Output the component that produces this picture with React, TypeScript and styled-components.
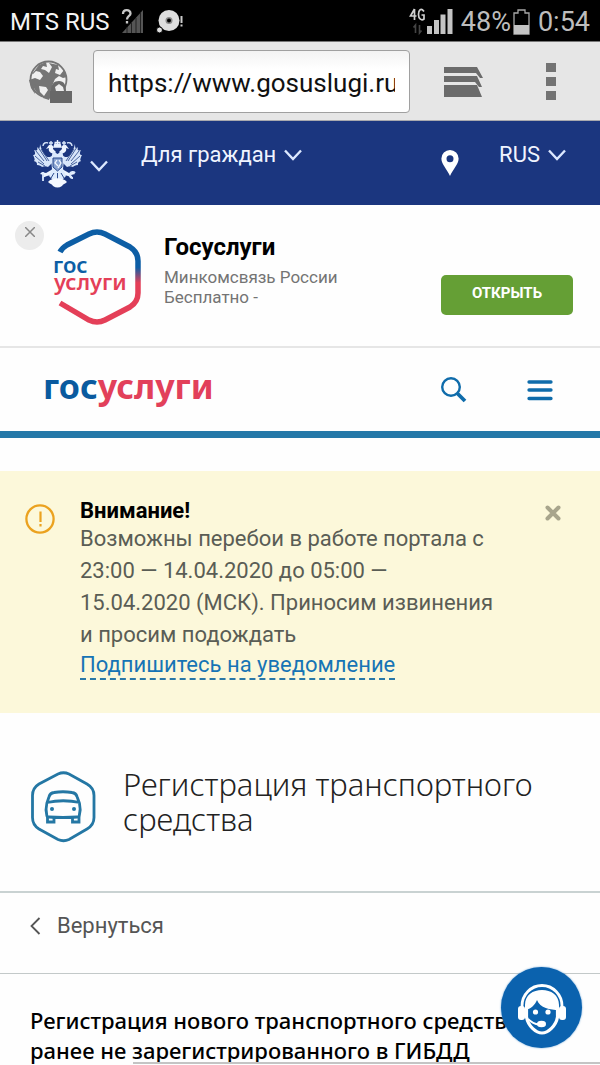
import React from "react";
import styled, { createGlobalStyle } from "styled-components";

const GlobalStyle = createGlobalStyle`
  * { box-sizing: border-box; }
  body {
    margin: 0;
    background: #fefefe;
    color: #000;
    font-family: Roboto, "Liberation Sans", sans-serif;
  }
  h1, h2, p { margin: 0; }
  button { border: 0; padding: 0; background: none; font: inherit; color: inherit; cursor: pointer; }
  svg { display: block; flex: none; }
`;

const brandFont = `"Noto Sans", "Open Sans", sans-serif`;

const Page = styled.div`
  display: flex;
  flex-direction: column;
`;

const StatusBar = styled.div`
  display: flex;
  align-items: center;
  justify-content: space-between;
  height: 42px;
  padding: 2px 10px 0;
  background: #000;
  color: #fff;
  border-bottom: 1px solid #777;
`;

const StatusGroup = styled.div<{ $muted?: boolean; $gap: number }>`
  display: flex;
  align-items: center;
  gap: ${(p) => p.$gap}px;
  color: ${(p) => (p.$muted ? "#bdbdbd" : "#f4f4f4")};
`;

const StatusText = styled.span<{ $size: number }>`
  font-size: ${(p) => p.$size}px;
  line-height: 32px;
  white-space: nowrap;
`;

const BrowserBar = styled.div`
  display: flex;
  align-items: center;
  height: 79px;
  padding: 1px 44px 0 29px;
  background: #e6e6e6;
  border-bottom: 1px solid #a9a9ae;
`;

const UrlInput = styled.input`
  flex: 1;
  min-width: 0;
  height: 63px;
  margin: 0 34px 0 21px;
  padding: 2px 14px 0;
  border: 1px solid #a0a0a0;
  border-radius: 4px;
  background: linear-gradient(#f3f3f3, #fff 30%);
  color: #111;
  font-family: inherit;
  font-size: 26px;
  outline: none;
`;

const IconButton = styled.button`
  display: flex;
  align-items: center;
  justify-content: center;
`;

const BrowserActions = styled.div`
  display: flex;
  align-items: center;
  gap: 62px;
`;

const TopNav = styled.nav`
  display: flex;
  align-items: flex-start;
  height: 84px;
  padding: 19px 34px 0 33px;
  background: #1b367f;
  color: #f0f4ff;
`;

const NavButton = styled.button`
  display: flex;
  align-items: center;
  gap: 8px;
  font-size: 22px;
  line-height: 30px;
  white-space: nowrap;
`;

const EmblemButton = styled(NavButton)`
  margin-right: 33px;
`;

const EmblemChevron = styled.span`
  padding-top: 4px;
`;

const PinButton = styled(IconButton)`
  margin: 10px 40px 0 auto;
`;

const AppBanner = styled.section`
  display: flex;
  align-items: flex-start;
  height: 143px;
  padding: 16px 27px 0 15px;
  border-bottom: 2px solid #e6e6e6;
`;

const BannerClose = styled(IconButton)`
  align-items: flex-start;
  width: 29px;
  height: 29px;
  padding-top: 6px;
  border-radius: 50%;
  background: #ececec;
`;

const BannerLogo = styled.div`
  margin: 8px 18px 0 6px;
`;

const BannerText = styled.div`
  flex: 1;
  padding-top: 10px;
  font-size: 17px;
  line-height: 20px;
  color: #747474;
`;

const BannerTitle = styled.h2`
  margin-bottom: 4px;
  font-size: 24px;
  line-height: 32px;
  font-weight: 700;
  color: #000;
`;

const OpenButton = styled.button`
  width: 132px;
  height: 40px;
  margin-top: 54px;
  padding-bottom: 4px;
  border-radius: 5px;
  background: #659f35;
  color: #fff;
  font-size: 15px;
  font-weight: 700;
`;

const SiteHeader = styled.header`
  display: flex;
  align-items: center;
  height: 90px;
  padding: 0 47px 0 43px;
  border-bottom: 7px solid #2478a8;
`;

const Brand = styled.a`
  margin-right: auto;
  padding-bottom: 8px;
  font-family: ${brandFont};
  font-size: 34px;
  line-height: 40px;
  font-weight: 700;
  color: #0a5a9f;
  text-decoration: none;
`;

const BrandAccent = styled.span`
  color: #e2405a;
`;

const HeaderActions = styled.div`
  display: flex;
  align-items: center;
  gap: 60px;
`;

const Notice = styled.section`
  display: flex;
  align-items: flex-start;
  margin-top: 33px;
  padding: 24px 39px 33px 25px;
  background: #fcf8da;
`;

const NoticeIcon = styled.div`
  margin: 9px 25px 0 0;
`;

const NoticeBody = styled.div`
  flex: 1;
  padding-right: 50px;
  font-size: 22px;
  line-height: 32px;
  color: #5a5d55;
`;

const NoticeTitle = styled.h2`
  font-size: 22px;
  line-height: 32px;
  font-weight: 700;
  color: #000;
`;

const NoticeText = styled.p`
  margin-top: -4px;
`;

const NoticeLink = styled.a`
  display: block;
  width: fit-content;
  line-height: 27px;
  color: #1674b5;
  text-decoration: none;
  border-bottom: 2px dashed #2a78a8;
`;

const NoticeClose = styled(IconButton)`
  margin-top: 10px;
`;

const ServiceHead = styled.section`
  display: flex;
  align-items: flex-start;
  min-height: 180px;
  padding: 54px 30px 0;
  border-bottom: 2px solid #c9d2d2;
`;

const ServiceIcon = styled.div`
  padding: 4px 27px 0 0;
`;

const ServiceTitle = styled.h1`
  font-family: ${brandFont};
  font-size: 31px;
  line-height: 35px;
  font-weight: 300;
  color: #222;
`;

const BackRow = styled.div`
  height: 81px;
  padding: 17px 30px;
  border-bottom: 1px solid #c3c9c9;
`;

const BackLink = styled.a`
  display: inline-flex;
  align-items: center;
  gap: 16px;
  font-size: 22px;
  line-height: 32px;
  color: #555;
  text-decoration: none;
`;

const Description = styled.p`
  padding: 31px 30px 0;
  font-family: ${brandFont};
  font-size: 22px;
  line-height: 30px;
  font-weight: 500;
  color: #000;
  overflow: hidden;
`;

const TextLine = styled.span`
  display: block;
  white-space: nowrap;
`;

const ScrollTrack = styled.div`
  position: fixed;
  left: 133px;
  right: 0;
  bottom: 1px;
  height: 2px;
  background: #c4c4c4;
`;

const ChatButton = styled.button`
  position: fixed;
  right: 18px;
  bottom: 17px;
  display: flex;
  width: 81px;
  height: 81px;
  border-radius: 50%;
  background: #0b62ae;
  box-shadow: 0 0 2px #5f9bd0;
`;

const Chevron = () => (
  <svg width="18" height="12" viewBox="0 0 18 12" fill="none" stroke="#dce8ff" strokeWidth="2.4">
    <path d="M1 1.5 9 10l8-8.500" />
  </svg>
);

const NoSignal = () => (
  <svg width="24" height="28" viewBox="0 0 24 28">
    <path d="M1 25 22 2v23z" fill="#555" />
    <path d="M6 19v6M10.500 15v10M15 10v15M19.500 5v20" stroke="#222" strokeWidth="1" />
    <path d="M2 6c0-5 7.500-5 7.500-.5C9.500 8 6 8 6 11.500M6 13v2.500" fill="none" stroke="#c8c8c8" strokeWidth="2.300" />
  </svg>
);

const Disc = () => (
  <svg width="28" height="26" viewBox="0 0 28 26">
    <circle cx="13" cy="11.500" r="10.500" fill="#dedede" />
    <circle cx="13" cy="11.500" r="3.500" fill="#8a8a8a" />
    <circle cx="13" cy="11.500" r="2" fill="#000" />
    <circle cx="3.500" cy="21" r="3" fill="#ddd" stroke="#000" />
    <path d="M25.500 7v7M25.500 15.500v2" stroke="#ccc" strokeWidth="2" />
  </svg>
);

const Signal = () => (
  <svg width="44" height="28" viewBox="0 0 44 28">
    <path d="M5.500 1 1.500 8h6M5.500 1v11" fill="none" stroke="#d0d0d0" strokeWidth="1.700" />
    <path d="M15 3.500C12-.5 9.500 2 9.500 6.500s3 6.500 5.500 4.500V7h-2.500" fill="none" stroke="#d0d0d0" strokeWidth="1.700" />
    <path d="M6.500 25v-8l-2 2.500M10.500 17v8l2-2.500" fill="none" stroke="#444" strokeWidth="1.600" />
    <path d="M18 18h5v8h-5zM25 12h5v14h-5zM31.500 6.500h5V26h-5zM38.500 1h5v25h-5z" fill="#c4c4c4" />
  </svg>
);

const Battery = () => (
  <svg width="17" height="26" viewBox="0 0 17 26">
    <path d="M1 4h4V1h7v3h4v21H1z" fill="#000" stroke="#a8a8a8" strokeWidth="1.300" />
    <path d="M1 16h15v9H1z" fill="#c4c4c4" />
  </svg>
);

const Globe = () => (
  <svg width="43" height="43" viewBox="0 0 43 43">
    <circle cx="19.500" cy="19.500" r="18" fill="#f0f0f0" stroke="#757575" strokeWidth="1.800" />
    <path
      d="M3 14 10 5l7-3 1 5-4-1-2 3 4 1 4 3 3-6-3-4 9 2 1 5-3-1-1 4 5 2 4-5 3 7-4 1-4-2-4 3-3 7 4 6-5 3-2 5-6-2 1-6-4-4-6-1 1 7-4-6-2-8 6-2 5 2 3-4-3-4-4-1-3 3z"
      fill="#757575"
    />
    <path d="M3 24c3 7 6 11 13 13l-1-8-5-3z" fill="#757575" />
    <path d="M10 26l7 1 2 3-4 6-4-4z" fill="#f0f0f0" />
    <path d="M22 31c0-7 3-10 8-10s7 4 7 10z" fill="#6b6b6b" />
    <path d="M27 31l-1-4 4-3 4 3 1 4z" fill="#ececec" />
    <path d="M21 31h22v12H21z" fill="#686868" />
  </svg>
);

const TabsIcon = () => (
  <svg width="40" height="32" viewBox="0 0 40 32" fill="#6b6b6b">
    <path d="M0 1h33l6 11h-3l-4-5H0z" />
    <path d="M0 10h33l5 11h-3l-4-5H0z" />
    <path d="M0 19h33l5 12H0z" />
  </svg>
);

const MenuDots = () => (
  <svg width="10" height="38" viewBox="0 0 10 38" fill="#737373">
    <path d="M0 0h10v9H0zM0 14h10v9H0zM0 28h10v9H0z" />
  </svg>
);

const EagleWing = () => (
  <g>
    <path d="M20 15C15 20 10 16 7 4c0 5-1 5-3 3 1 4 0 4-3 3 2 4 1 5-1 5 2 4 2 5 1 6 3 1 3 2 3 4 3 0 4 1 5 2 2-1 4-1 6 0l5-5z" fill="#d8e6fa" />
    <path d="m3 11 8 10M2 16l9 8M5 7l9 14M5 22l7 4M8 9l8 12" fill="none" stroke="#375392" strokeWidth=".9" />
    <path d="M21 14c-4-1-6-3-5-6l-3 1 3-4c3-1 5 1 4 4l3 3" fill="#eef5ff" />
    <path d="M10 6c0-3 3-4 5-3M18 1v5M16 3h4" stroke="#d8e6fa" fill="none" strokeWidth="1.400" />
    <path d="m20 29-7 4-4-1-2 2 4 1-2 3 5-2 8-2" fill="#eef5ff" />
  </g>
);

const Eagle = () => (
  <svg width="49" height="48" viewBox="0 0 49 48">
    <EagleWing />
    <g transform="translate(49 0) scale(-1 1)">
      <EagleWing />
    </g>
    <path d="M24.500 0v7M21.500 2.500h6M21 7h7l-1-3-2.500 1L22 4z" stroke="#e8f1ff" strokeWidth="1.400" fill="#e8f1ff" />
    <path d="M20 11l4.500 3 4.500-3 2 8-1 10 3 7-5 5h-7l-5-5 3-7-1-10z" fill="#dceafd" />
    <path d="M20 18h9v9l-4.500 4-4.500-4z" fill="#8ba5d2" stroke="#29488c" />
    <path d="m24 20-2 3 3 3m1-6 2 3-3 5" stroke="#f4f8ff" fill="none" strokeWidth="1.300" />
    <path d="m21 33-3 5m10-5 3 5m-6.500-5v7" stroke="#29488c" strokeWidth="1" />
    <path d="M15 42c4-5 15-5 19 0-2 2-4 2-5 4-3 2-6 2-9 0-1-2-3-2-5-4z" fill="#f4f8ff" />
    <path d="M10 32v9" stroke="#dceafd" strokeWidth="1.800" />
    <path d="M42 33a3 3 0 1 0-2 5" stroke="#dceafd" strokeWidth="2" fill="none" />
  </svg>
);

const Pin = () => (
  <svg width="18" height="26" viewBox="0 0 18 26">
    <path fillRule="evenodd" d="M9 0a8.600 8.600 0 0 1 8.600 8.700C17.600 14 12 19 9 26 6 19 .4 14 .4 8.700A8.600 8.600 0 0 1 9 0zm0 5.200a3.500 3.500 0 1 0 0 7 3.500 3.500 0 0 0 0-7z" fill="#fff" />
  </svg>
);

const AppLogo = () => (
  <svg width="96" height="98" viewBox="0 0 96 98" fontFamily='"Noto Sans", sans-serif' fontWeight="600">
    <defs>
      <linearGradient id="logoStroke" x1="0" y1="0" x2="0" y2="96" gradientUnits="userSpaceOnUse">
        <stop offset=".4" stopColor="#0d5ea5" />
        <stop offset=".56" stopColor="#e43f58" />
      </linearGradient>
    </defs>
    <path
      d="M10 23Q12 19 17 16L39 5Q47 1 55 5L80 18Q88 23 88 32V64Q88 73 80 78L55 91Q47 95 39 91L10 74"
      fill="none"
      stroke="url(#logoStroke)"
      strokeWidth="5.500"
    />
    <text x="3" y="44" fontSize="22" fill="#0d5ea5">гос</text>
    <text x="4" y="61" fontSize="22" fill="#e43f58">услуги</text>
  </svg>
);

const SearchIcon = () => (
  <svg width="26" height="26" viewBox="0 0 26 26" fill="none" stroke="#0f6cab">
    <circle cx="10" cy="10" r="8.800" strokeWidth="2.400" />
    <path d="m16.500 16.500 7.500 7.500" strokeWidth="3.800" />
  </svg>
);

const MenuIcon = () => (
  <svg width="26" height="22" viewBox="0 0 26 22" stroke="#0f6cab" strokeWidth="3.300" strokeLinecap="round">
    <path d="M2 3h22M2 11h22M2 19.500h22" />
  </svg>
);

const WarningIcon = () => (
  <svg width="30" height="30" viewBox="0 0 30 30" fill="none" stroke="#eba21f" strokeWidth="2.300">
    <circle cx="15" cy="15" r="13.600" />
    <path d="M15.500 7.500v10.500M15.500 20v2.500" strokeWidth="2.200" />
  </svg>
);

const CarIcon = () => (
  <svg width="66" height="72" viewBox="0 0 66 72" fill="none" stroke="#2477a4" strokeWidth="2.800">
    <path d="M28 3Q33.500 .5 39 3L57 13Q64 17 64 24.500V46.500Q64 54 57 58L39 68.500Q33.500 71 28 68.500L9 58Q2.500 54 2.500 46.500V24.500Q2.500 17 9 13Z" />
    <path d="M24 21.500q9-1.500 18 0 4 .5 5 4l2.500 7q1.500 6-.2 12-.3 1.500-2 1.500-14 1-28.500 0-1.700 0-2-1.500-1.500-6 0-12l2.300-7q1-3.500 4.900-4zM17 31.500q16-3.500 33 0" />
    <path d="M17.500 45.500V51H24v-5M42.500 46v5H49v-5.500" />
    <circle cx="22" cy="38" r="2" fill="#2477a4" stroke="none" />
    <circle cx="44" cy="38" r="2" fill="#2477a4" stroke="none" />
  </svg>
);

const OperatorIcon = () => (
  <svg width="81" height="81" viewBox="0 0 81 81">
    <path d="M21 41v-2a20 20.500 0 0 1 40 0v2" fill="none" stroke="#fff" strokeWidth="2.800" />
    <rect x="17" y="39" width="7" height="14" rx="3" fill="#fff" />
    <rect x="58" y="39" width="7" height="14" rx="3" fill="#fff" />
    <path d="M25.500 42v8C27 59 35 66 41 66s14-7 15.500-16v-8" fill="none" stroke="#fff" strokeWidth="3.200" />
    <path d="M24 43v-5c0-10 8-15 17-15s17 5 17 15v5c-9 0-19-2-22-10-2 5-6 9-12 10z" fill="#fff" />
    <circle cx="34.500" cy="45" r="2.600" fill="#fff" />
    <circle cx="47" cy="45" r="2.600" fill="#fff" />
    <path d="M27 52c3 3 6 5 11 5.500" fill="none" stroke="#fff" strokeWidth="1.800" />
    <ellipse cx="40.500" cy="57" rx="4.500" ry="3.200" fill="#fff" />
  </svg>
);

export default function App() {
  return (
    <Page>
      <GlobalStyle />
      <StatusBar>
        <StatusGroup $gap={11}>
          <StatusText $size={24}>MTS RUS</StatusText>
          <NoSignal />
          <Disc />
        </StatusGroup>
        <StatusGroup $muted $gap={8}>
          <Signal />
          <StatusGroup $muted $gap={2}>
            <StatusText $size={27}>48%</StatusText>
            <Battery />
          </StatusGroup>
          <StatusText $size={27}>0:54</StatusText>
        </StatusGroup>
      </StatusBar>

      <BrowserBar>
        <Globe />
        <UrlInput type="text" aria-label="Адрес" defaultValue="https://www.gosuslugi.ru" />
        <BrowserActions>
          <IconButton aria-label="Вкладки"><TabsIcon /></IconButton>
          <IconButton aria-label="Меню браузера"><MenuDots /></IconButton>
        </BrowserActions>
      </BrowserBar>

      <TopNav>
        <EmblemButton aria-label="Государственные органы">
          <Eagle />
          <EmblemChevron><Chevron /></EmblemChevron>
        </EmblemButton>
        <NavButton>Для граждан <Chevron /></NavButton>
        <PinButton aria-label="Местоположение"><Pin /></PinButton>
        <NavButton>RUS <Chevron /></NavButton>
      </TopNav>

      <AppBanner>
        <BannerClose aria-label="Закрыть">
          <svg width="10" height="10" viewBox="0 0 10 10" stroke="#888" strokeWidth="1.500">
            <path d="m0 0 10 10M10 0 0 10" />
          </svg>
        </BannerClose>
        <BannerLogo><AppLogo /></BannerLogo>
        <BannerText>
          <BannerTitle>Госуслуги</BannerTitle>
          <p>Минкомсвязь России</p>
          <p>Бесплатно -</p>
        </BannerText>
        <OpenButton>ОТКРЫТЬ</OpenButton>
      </AppBanner>

      <SiteHeader>
        <Brand href="#">гос<BrandAccent>услуги</BrandAccent></Brand>
        <HeaderActions>
          <IconButton aria-label="Поиск"><SearchIcon /></IconButton>
          <IconButton aria-label="Меню"><MenuIcon /></IconButton>
        </HeaderActions>
      </SiteHeader>

      <Notice>
        <NoticeIcon><WarningIcon /></NoticeIcon>
        <NoticeBody>
          <NoticeTitle>Внимание!</NoticeTitle>
          <NoticeText>
            Возможны перебои в работе портала с 23:00 — 14.04.2020 до 05:00 — 15.04.2020 (МСК). Приносим извинения
            и просим подождать
          </NoticeText>
          <NoticeLink href="#">Подпишитесь на уведомление</NoticeLink>
        </NoticeBody>
        <NoticeClose aria-label="Закрыть уведомление">
          <svg width="16" height="16" viewBox="0 0 16 16" stroke="#a8a58c" strokeWidth="4" strokeLinecap="round">
            <path d="m2.500 2.500 11 11M13.500 2.500l-11 11" />
          </svg>
        </NoticeClose>
      </Notice>

      <ServiceHead>
        <ServiceIcon><CarIcon /></ServiceIcon>
        <ServiceTitle>Регистрация транспортного средства</ServiceTitle>
      </ServiceHead>

      <BackRow>
        <BackLink href="#">
          <svg width="11" height="18" viewBox="0 0 11 18" fill="none" stroke="#555" strokeWidth="1.800">
            <path d="M9.500 1 1.500 9l8 8" />
          </svg>
          Вернуться
        </BackLink>
      </BackRow>

      <Description>
        <TextLine>Регистрация нового транспортного средства</TextLine>
        <TextLine>ранее не зарегистрированного в ГИБДД</TextLine>
      </Description>

      <ScrollTrack />
      <ChatButton aria-label="Чат с оператором"><OperatorIcon /></ChatButton>
    </Page>
  );
}
